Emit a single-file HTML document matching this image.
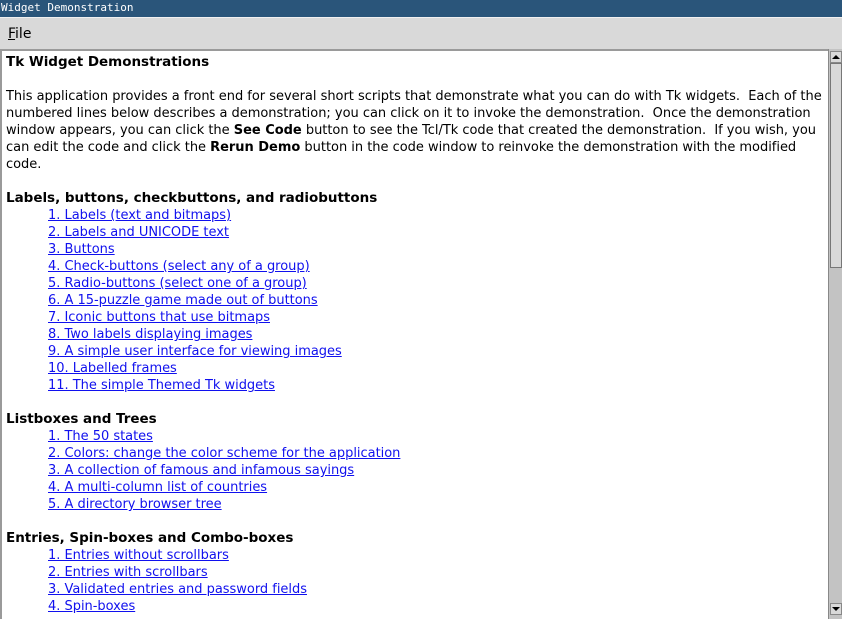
<!DOCTYPE html>
<html><head><meta charset="utf-8"><style>
*{margin:0;padding:0;box-sizing:border-box}
body{width:842px;height:619px;overflow:hidden;background:#d9d9d9;font-family:"DejaVu Sans","Liberation Sans",sans-serif;font-size:13px;position:relative}
#title{position:absolute;left:0;top:0;width:842px;height:17px;background:#2a557a;color:#fff;font-family:"DejaVu Sans Mono","Liberation Mono",monospace;font-size:11px;line-height:16px;padding-left:1px}
#menu{position:absolute;left:0;top:17px;width:842px;height:32px;background:#d9d9d9;border-top:1px solid #f0f0f0}
#menu span{position:absolute;left:8px;top:8px;font-size:14px;color:#000}
#text{position:absolute;left:0;top:49px;width:828px;height:570px;background:#fff;border-top:2px solid #9a9a9a;border-left:2px solid #9a9a9a;overflow:hidden;padding:3px 0 0 4px;line-height:17px;color:#000;letter-spacing:-0.02px}
b{font-weight:bold}
.h{font-weight:bold;font-size:13.5px}
a{color:#1010ee;text-decoration:underline;display:block;margin-left:42px}
p{margin:0}
#sb{position:absolute;left:828px;top:49px;width:14px;height:570px;background:#c3c3c3;border-left:1px solid #888}
.btn{position:absolute;left:1px;width:12px;height:12px;background:#d9d9d9;border:1px solid #888}
#slider{position:absolute;left:1px;top:14px;width:12px;height:205px;background:#d9d9d9;border:1px solid #777}
</style></head><body>
<div id="title">Widget Demonstration</div>
<div id="menu"><span><u>F</u>ile</span></div>
<div id="text">
<p class="h">Tk Widget Demonstrations</p>
<p>&nbsp;</p>
<p>This application provides a front end for several short scripts that demonstrate what you can do with Tk widgets.&nbsp; Each of the numbered lines below describes a demonstration; you can click on it to invoke the demonstration.&nbsp; Once the demonstration window appears, you can click the <b>See Code</b> button to see the Tcl/Tk code that created the demonstration.&nbsp; If you wish, you can edit the code and click the <b>Rerun Demo</b> button in the code window to reinvoke the demonstration with the modified code.</p>
<p>&nbsp;</p>
<p class="h">Labels, buttons, checkbuttons, and radiobuttons</p>
<a>1. Labels (text and bitmaps)</a>
<a>2. Labels and UNICODE text</a>
<a>3. Buttons</a>
<a>4. Check-buttons (select any of a group)</a>
<a>5. Radio-buttons (select one of a group)</a>
<a>6. A 15-puzzle game made out of buttons</a>
<a>7. Iconic buttons that use bitmaps</a>
<a>8. Two labels displaying images</a>
<a>9. A simple user interface for viewing images</a>
<a>10. Labelled frames</a>
<a>11. The simple Themed Tk widgets</a>
<p>&nbsp;</p>
<p class="h">Listboxes and Trees</p>
<a>1. The 50 states</a>
<a>2. Colors: change the color scheme for the application</a>
<a>3. A collection of famous and infamous sayings</a>
<a>4. A multi-column list of countries</a>
<a>5. A directory browser tree</a>
<p>&nbsp;</p>
<p class="h">Entries, Spin-boxes and Combo-boxes</p>
<a>1. Entries without scrollbars</a>
<a>2. Entries with scrollbars</a>
<a>3. Validated entries and password fields</a>
<a>4. Spin-boxes</a>
</div>
<div id="sb">
<div class="btn" style="top:2px"><svg width="10" height="10" style="position:absolute;left:0;top:0"><path d="M1 7 L9 7 L5 3 Z" fill="#000"/></svg></div>
<div id="slider"></div>
<div class="btn" style="top:554px"><svg width="10" height="10" style="position:absolute;left:0;top:0"><path d="M1 3 L9 3 L5 7 Z" fill="#000"/></svg></div>
</div>
</body></html>
